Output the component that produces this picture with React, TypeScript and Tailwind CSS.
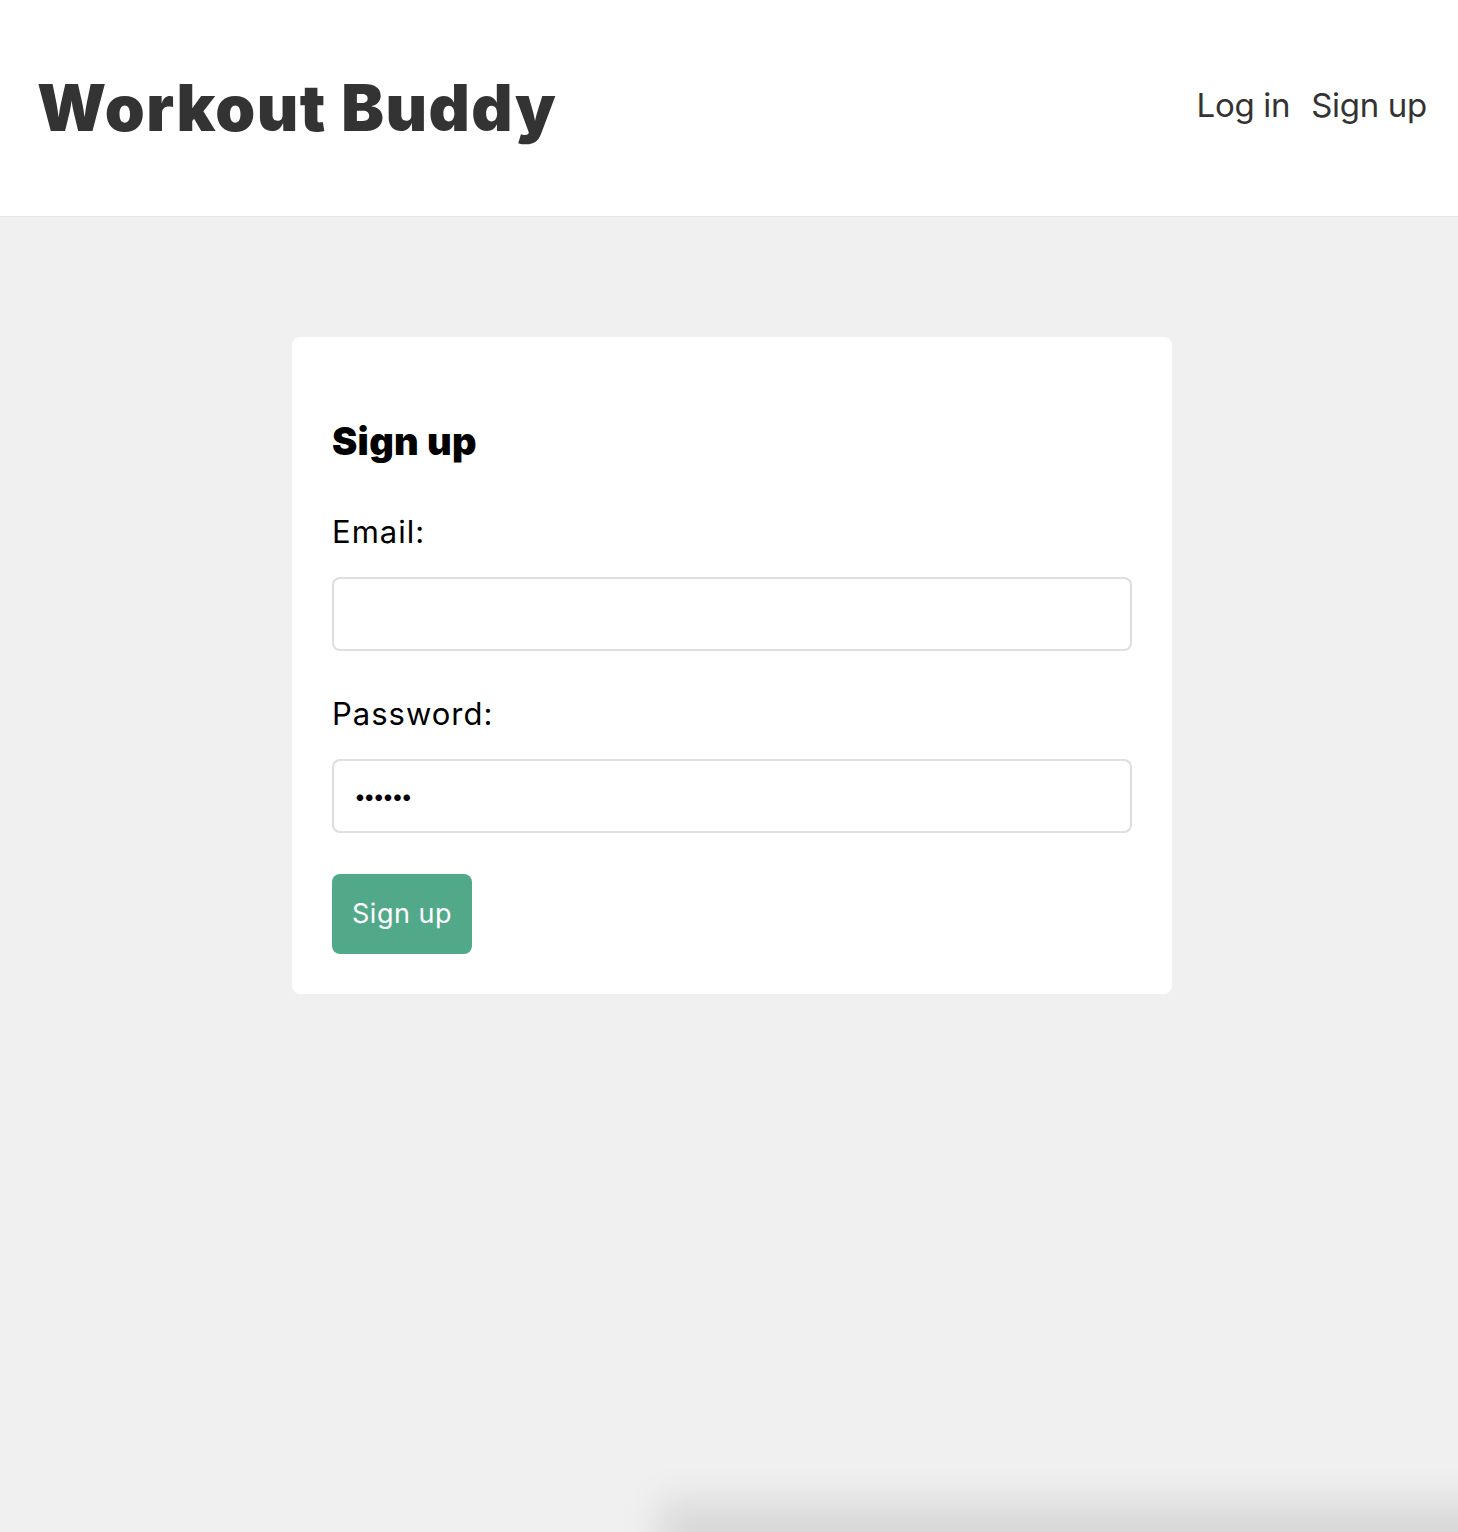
import { useState } from "react";

const font = { fontFamily: "Inter, 'Noto Sans', sans-serif" };

const Navbar = () => {
  return (
    <header className="bg-white border-b border-[#e6e6e6]">
      <div className="flex items-center justify-between h-[216px] pl-[37px] pr-[31px]">
        <a href="#" className="text-[#333] no-underline">
          <h1 className="text-[64px] font-black tracking-[1.5px] leading-none">
            Workout Buddy
          </h1>
        </a>
        <nav className="flex items-center gap-[21px] text-[33px] text-[#333] tracking-[-0.3px] pb-[4px]">
          <a href="#">Log in</a>
          <a href="#">Sign up</a>
        </nav>
      </div>
    </header>
  );
};

const Signup = () => {
  const [email, setEmail] = useState("");
  const [password, setPassword] = useState("123456");

  return (
    <div className="pl-[6px]">
      <form
        className="w-[880px] mx-auto mt-[120px] bg-white rounded-[8px] p-[40px]"
        onSubmit={(e) => e.preventDefault()}
      >
        <h3 className="text-[38px] font-black text-black leading-none tracking-[0.3px] mt-[45px] mb-[56px]">
          Sign up
        </h3>

        <label className="block text-[31px] text-black leading-none tracking-[1px]">Email:</label>
        <input
          type="email"
          value={email}
          onChange={(e) => setEmail(e.target.value)}
          className="block w-full h-[74px] mt-[30px] mb-[47px] px-[20px] border-2 border-[#dedede] rounded-[8px] text-[28px] outline-none"
        />

        <label className="block text-[31px] text-black leading-none tracking-[1px]">Password:</label>
        <input
          type="password"
          value={password}
          onChange={(e) => setPassword(e.target.value)}
          className="block w-full h-[74px] mt-[30px] mb-[41px] px-[21px] border-2 border-[#dedede] rounded-[8px] text-[21px] font-bold tracking-[-0.6px] text-black outline-none"
        />

        <button className="bg-[#52a98a] text-white text-[27px] tracking-[0.5px] rounded-[8px] w-[140px] h-[80px]">
          Sign up
        </button>
      </form>
    </div>
  );
};

export default function App() {
  return (
    <div className="relative min-h-[1532px] bg-[#f0f0f0] overflow-hidden" style={font}>
      <Navbar />
      <Signup />
      {/* faint shadow along the bottom edge */}
      <div className="absolute left-[660px] right-[-40px] bottom-[-30px] h-[60px] bg-black/10 blur-[18px]" />
    </div>
  );
}
